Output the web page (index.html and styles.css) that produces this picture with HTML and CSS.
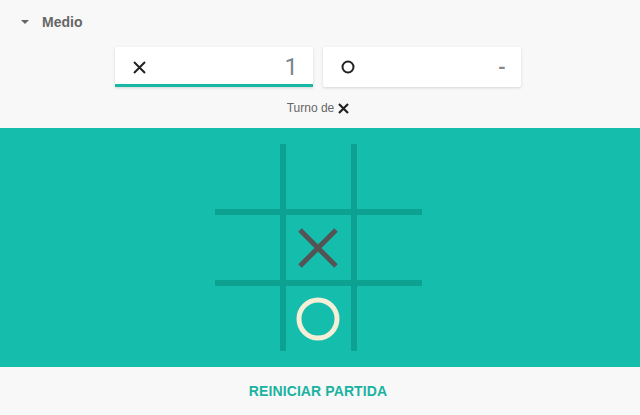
FILE: index.html
```html
<!DOCTYPE html>
<html lang="es">
<head>
<meta charset="utf-8">
<link rel="stylesheet" href="styles.css">
</head>
<body>
<div class="header">
  <span class="caret"></span>
  <span class="level">Medio</span>
</div>
<div class="scores">
  <div class="card active">
    <svg class="mark" width="13" height="13" viewBox="0 0 13 13"><path d="M1 1L12 12M12 1L1 12" stroke="#222" stroke-width="2"/></svg>
    <span class="score">1</span>
  </div>
  <div class="card">
    <svg class="mark" width="14" height="14" viewBox="0 0 14 14"><circle cx="7" cy="7" r="5.5" fill="none" stroke="#222" stroke-width="2"/></svg>
    <span class="score dash">-</span>
  </div>
</div>
<div class="turn">Turno de <svg class="turn-x" width="11" height="11" viewBox="0 0 11 11"><path d="M1 1L10 10M10 1L1 10" stroke="#222" stroke-width="2.2"/></svg></div>
<div class="board-band">
  <div class="board">
    <div class="cell"></div>
    <div class="cell"></div>
    <div class="cell"></div>
    <div class="cell"></div>
    <div class="cell"><svg width="40" height="40" viewBox="0 0 40 40"><path d="M2 2L38 38M38 2L2 38" stroke="#545454" stroke-width="5"/></svg></div>
    <div class="cell"></div>
    <div class="cell"></div>
    <div class="cell"><svg width="44" height="44" viewBox="0 0 44 44"><circle cx="22" cy="22" r="19" fill="none" stroke="#f4efd6" stroke-width="5"/></svg></div>
    <div class="cell"></div>
  </div>
</div>
<div class="footer">
  <span class="restart">REINICIAR PARTIDA</span>
</div>
</body>
</html>
```

FILE: styles.css
```css
html, body {
  margin: 0;
  padding: 0;
}
body {
  background: #f8f8f8;
  font-family: "Liberation Sans", Arial, sans-serif;
  width: 640px;
  height: 415px;
  overflow: hidden;
}
.header {
  height: 44px;
  display: flex;
  align-items: center;
  padding-left: 21px;
}
.caret {
  width: 0;
  height: 0;
  border-left: 4px solid transparent;
  border-right: 4px solid transparent;
  border-top: 4px solid #666;
}
.level {
  margin-left: 13px;
  font-size: 14px;
  font-weight: bold;
  color: #666;
}
.scores {
  margin-top: 3px;
  display: flex;
  justify-content: center;
  gap: 10px;
  padding-right: 4px;
}
.card {
  box-sizing: border-box;
  width: 198px;
  height: 40px;
  background: #fff;
  box-shadow: 0 1px 3px rgba(0, 0, 0, 0.14);
  display: flex;
  align-items: center;
  justify-content: space-between;
  padding: 0 15px 0 18px;
  border-radius: 2px;
}
.card.active {
  border-bottom: 3px solid #17b8a6;
  padding-top: 3px;
  border-radius: 2px 2px 0 0;
}
.score {
  font-family: Roboto, "Liberation Sans", sans-serif;
  font-weight: 400;
  font-size: 24px;
  color: #7b878c;
}
.score.dash {
  font-size: 20px;
  font-weight: 700;
  color: #888;
}
.turn {
  box-sizing: border-box;
  height: 41px;
  display: flex;
  align-items: center;
  justify-content: center;
  gap: 4px;
  font-size: 12px;
  color: #666;
  padding: 1px 4px 0 0;
}
.board-band {
  background: #14bdac;
  padding: 16px 4px 16px 0;
  display: flex;
  justify-content: center;
}
.board {
  display: grid;
  grid-template-columns: repeat(3, 65px);
  grid-template-rows: repeat(3, 65px);
  gap: 6px;
  background: #0da192;
}
.cell {
  background: #14bdac;
  display: flex;
  align-items: center;
  justify-content: center;
}
.footer {
  height: 48px;
  display: flex;
  align-items: center;
  justify-content: center;
  padding-right: 4px;
}
.restart {
  font-size: 14px;
  font-weight: bold;
  color: #1ab3a2;
  letter-spacing: 0.1px;
}
```
